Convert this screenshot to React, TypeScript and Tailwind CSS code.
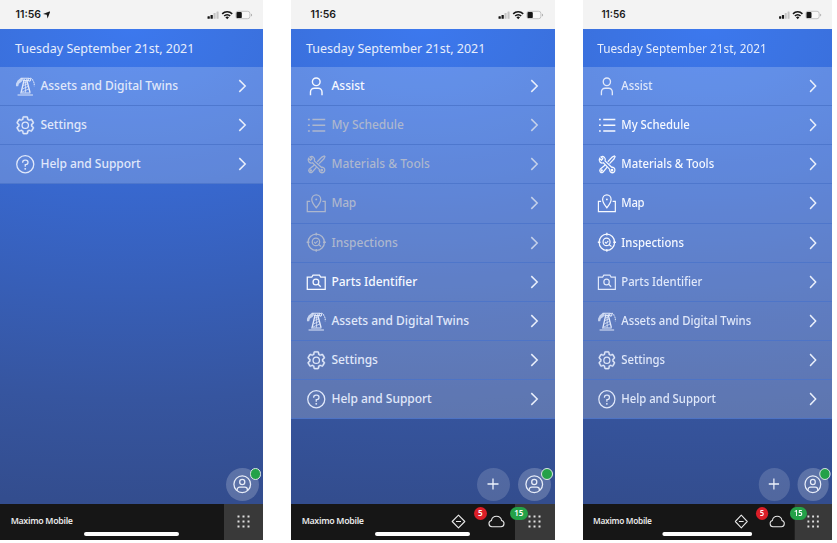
import React from "react";

const S = { fill: "none", stroke: "currentColor", strokeWidth: 2 } as const;

const icons: Record<string, React.ReactNode> = {
  user: (
    <g {...S} strokeWidth={2.2}>
      <circle cx="16" cy="9" r="6" />
      <path d="M7 30V25a6 6 0 0 1 6-6h6a6 6 0 0 1 6 6v5" />
    </g>
  ),
  list: (
    <g {...S} strokeWidth={2.2}>
      <path d="M10 7h20M10 16h20M10 25h20" />
      <path d="M3 7h3M3 16h3M3 25h3" />
    </g>
  ),
  tools: (
    <g {...S} strokeWidth={2}>
      <path d="M13 10.800a4.800 4.800 0 0 0-6.700-6.200l3 3-2.300 2.300-3-3a4.800 4.800 0 0 0 6.200 6.700L20.800 24a4.300 4.300 0 1 0 3.200-3.200Z" />
      <circle cx="24.500" cy="25.200" r="1.200" />
      <path d="m17.600 12.200 7.200-7.300 3.600-1.900 1.200 1.200-1.900 3.600-7.200 7.200M13.200 17l-8.300 6.800a3.300 3.300 0 0 0 4.600 4.600l7-8" />
      <circle cx="7.500" cy="25.800" r="1" />
    </g>
  ),
  map: (
    <g {...S}>
      <path d="M16 23c-3-3.600-7-8.200-7-13a7 7 0 0 1 14 0c0 4.800-4 9.400-7 13Z" />
      <circle cx="16" cy="10" r="1.500" fill="currentColor" stroke="none" />
      <path d="M6.500 13H2v16h28V13h-4.500" />
    </g>
  ),
  inspect: (
    <g {...S}>
      <circle cx="16" cy="16" r="12.800" />
      <path d="M16 1v4.500M16 26.500V31M1 16h4.500M26.500 16H31" />
      <circle cx="15.500" cy="15.500" r="5.800" />
      <path d="m19.600 19.600 4 3M12.800 15.600l2 2 3.600-3.800" strokeWidth="1.700" />
    </g>
  ),
  camera: (
    <g {...S}>
      <path d="M2 8h7l2-3h10l2 3h7v19H2Z" />
      <circle cx="15.500" cy="15.500" r="4.500" />
      <path d="m18.700 18.700 4.300 4.300" />
    </g>
  ),
  asset: (
    <g fill="none" stroke="currentColor" strokeWidth="1.600">
      <path d="M1.500 16V12l2.500-5 5-4 4 1-2.500 5-4.500 3-1 4Z" fill="currentColor" fillOpacity="0.8" stroke="none" />
      <path d="M9 3.500h13M12 7h9" />
      <path d="m14.500 5-5 21M18 5l5.500 21" strokeWidth="2.200" />
      <path d="m14 11 5-2M13 15l7-3M12 20l9-4M11 25l11-5" strokeWidth="1.200" />
      <path d="M16.500 8v18" strokeWidth="1.200" />
      <path d="M4 29.500h24M8 26.500h16" />
      <path d="m24 3 3.500 3 2.500 5v5" strokeDasharray="2.500 1.200" />
      <circle cx="22.500" cy="6" r="2" />
    </g>
  ),
  settings: (
    <g fill="currentColor">
      <path d="M27,16.760c0-.25,0-.5,0-.76s0-.51,0-.77l1.920-1.680A2,2,0,0,0,29.300,11L26.940,7a2,2,0,0,0-1.730-1,2,2,0,0,0-.64.1l-2.430.82a11.350,11.350,0,0,0-1.310-.75l-.51-2.520a2,2,0,0,0-2-1.610H13.640a2,2,0,0,0-2,1.610l-.51,2.520a11.480,11.480,0,0,0-1.320.75L7.430,6.060A2,2,0,0,0,6.790,6,2,2,0,0,0,5.060,7L2.700,11a2,2,0,0,0,.41,2.510L5,15.240c0,.25,0,.5,0,.76s0,.51,0,.77L3.110,18.450A2,2,0,0,0,2.700,21L5.060,25a2,2,0,0,0,1.730,1,2,2,0,0,0,.64-.1l2.430-.82a11.350,11.350,0,0,0,1.310.75l.51,2.520a2,2,0,0,0,2,1.610h4.720a2,2,0,0,0,2-1.610l.51-2.520a11.480,11.480,0,0,0,1.320-.75l2.420.82a2,2,0,0,0,.64.1,2,2,0,0,0,1.730-1L29.300,21a2,2,0,0,0-.41-2.510ZM25.210,24l-3.430-1.160a8.860,8.860,0,0,1-2.710,1.570L18.360,28H13.640l-.71-3.550a9.360,9.360,0,0,1-2.700-1.570L6.790,24,4.430,20l2.720-2.400a8.900,8.900,0,0,1,0-3.130L4.430,12,6.790,8l3.430,1.160a8.860,8.860,0,0,1,2.710-1.570L13.640,4h4.720l.71,3.550a9.360,9.360,0,0,1,2.700,1.570L25.210,8,27.570,12l-2.720,2.400a8.900,8.900,0,0,1,0,3.130L27.570,20Z" stroke="currentColor" strokeWidth="0.500" />
      <circle cx="16" cy="16" r="5" {...S} />
    </g>
  ),
  help: (
    <g {...S}>
      <circle cx="16" cy="16" r="13.300" />
      <path d="M12 13.500V13a3.500 3.500 0 0 1 3.500-3.500h1.300a3.500 3.500 0 0 1 0 7H16v3.300" />
      <circle cx="16" cy="23.200" r="1.500" fill="currentColor" stroke="none" />
    </g>
  ),
};

const labels: Record<string, [string, string]> = {
  user: ["Assist", "tracking-[0px]"],
  list: ["My Schedule", "tracking-[0px]"],
  tools: ["Materials & Tools", "tracking-[0px]"],
  map: ["Map", "tracking-[-0.3px]"],
  inspect: ["Inspections", "tracking-[0px]"],
  camera: ["Parts Identifier", "tracking-[-0.03px]"],
  asset: ["Assets and Digital Twins", "tracking-[-0.03px]"],
  settings: ["Settings", "tracking-[-0.05px]"],
  help: ["Help and Support", "tracking-[-0.03px]"],
};

const all = ["user", "list", "tools", "map", "inspect", "camera", "asset", "settings", "help"];

function StatusBar({ located }: { located?: boolean }) {
  return (
    <div className={`flex h-[29px] shrink-0 items-center bg-[#f3f3f3] pr-[10.500px] text-[#1a1a1a] ${located ? "pl-[15.500px]" : "pl-[19.500px]"}`}>
      <span className="pt-[2px] font-[Inter] text-[10.500px] leading-none font-semibold">11:56</span>
      {located && (
        <svg className="mt-[1px] ml-[1.500px] size-[7.500px]" viewBox="0 0 14 14" fill="currentColor">
          <path d="M14 0 8.500 14 7 7 0 5.500Z" />
        </svg>
      )}
      <svg className="ml-auto h-[10px] w-[46px]" viewBox="0 0 46 10" fill="#151515">
        <rect x="0.500" y="6.300" width="2.300" height="2.400" rx="0.500" />
        <rect x="3.500" y="5" width="2.300" height="3.700" rx="0.500" />
        <rect x="6.500" y="3" width="2.100" height="5.700" rx="0.500" fill="#c4c4c4" />
        <rect x="9.500" y="1.400" width="2.100" height="7.300" rx="0.500" fill="#c4c4c4" />
        <g fill="none" stroke="#151515" strokeWidth="1.600">
          <path d="M15.200 3.800a7.200 7.200 0 0 1 10 0M17.200 6a4.200 4.200 0 0 1 6 0" />
        </g>
        <path d="m20.200 9.300 1.800-2.100a2.700 2.700 0 0 0-3.600 0Z" />
        <rect x="28.900" y="1.300" width="14" height="7.400" rx="2.200" fill="#f8f8f8" stroke="#b5b5b5" strokeWidth="0.800" />
        <rect x="29.500" y="1.900" width="5.300" height="6.200" rx="1.200" />
        <path d="M44 3.800v2.600q1.100-.4 1.100-1.300t-1.100-1.300" fill="#aaa" />
      </svg>
    </div>
  );
}

function Row({ id, dim, bright }: { id: string; dim: boolean; bright: boolean }) {
  const [label, track] = labels[id];
  const tone = dim ? "text-[#adb7ce]" : bright ? "text-[#f6f9ff]" : "text-[#e0e8fa]";
  return (
    <div className={`flex h-[39.150px] items-center border-b border-[#4a73c9]/80 bg-white/20 pr-[16px] pl-[15.300px] ${tone}`}>
      <svg className="size-[20.500px] shrink-0" viewBox="0 0 32 32">{icons[id]}</svg>
      <span className={`ml-[4.700px] text-[12px] leading-none font-medium whitespace-nowrap ${track}`}>{label}</span>
      <svg className="ml-auto h-[14px] w-[9px]" viewBox="0 0 9 14" fill="none" stroke={dim ? "#c5d1ea" : "#e9effb"} strokeWidth="1.500">
        <path d="m1.300 1.100 5.900 5.900-5.900 5.900" />
      </svg>
    </div>
  );
}

function Account() {
  return (
    <div className="relative flex size-[33px] items-center justify-center rounded-full bg-white/20 text-[#e8edf8]">
      <svg className="size-[20.500px]" viewBox="0 0 32 32" {...S}>
        <circle cx="16" cy="16" r="13" />
        <circle cx="16" cy="12.500" r="4" />
        <path d="M8 26v-1.500a4 4 0 0 1 4-4h8a4 4 0 0 1 4 4V26" />
      </svg>
      <span className="absolute top-[0.500px] right-[-2px] size-[11.500px] rounded-full border-[1.500px] border-[#dfe6e8] bg-[#24a148]" />
    </div>
  );
}

function Phone({ ids, dims = [], brights = [], full, located, frame }: { ids: string[]; dims?: string[]; brights?: string[]; full?: boolean; located?: boolean; frame: string }) {
  return (
    <div className={`flex h-[540px] shrink-0 flex-col overflow-hidden ${frame}`}>
      <StatusBar located={located} />
      <div className="flex flex-1 flex-col bg-[radial-gradient(320%_100%_at_50%_0%,#3c78ee_0%,#3b73e2_12%,#3868cf_33%,#36559f_78%,#334d8e_100%)]">
        <div className="flex h-[38px] items-center pt-[2px] pl-[15px] text-[12.500px] leading-none whitespace-nowrap text-[#e6edfc]">
          Tuesday September 21st, 2021
        </div>
        {ids.map((id) => (
          <Row key={id} id={id} dim={dims.includes(id)} bright={brights.includes(id)} />
        ))}
        <div className="mt-auto mb-[3px] flex justify-end gap-[8px] pr-[4px]">
          {full && (
            <div className="flex size-[33px] items-center justify-center rounded-full bg-white/15">
              <svg className="size-[12px]" viewBox="0 0 12 12" stroke="#edf2fc" strokeWidth="1.300"><path d="M6 .5v11M.5 6h11" /></svg>
            </div>
          )}
          <Account />
        </div>
      </div>
      <div className="relative flex h-[36.300px] shrink-0 items-center bg-[#161616] pl-[10.700px] text-[#e8e8e8]">
        <span className="text-[8.800px] leading-none font-semibold tracking-[-0.32px] whitespace-nowrap">Maximo Mobile</span>
        <div className="ml-auto flex h-full items-center">
          {full && (
            <>
              <svg className="mr-[22.500px] size-[15px]" viewBox="0 0 15 15" fill="none" stroke="currentColor" strokeWidth="1.100">
                <path d="M7.500 1.200 13.800 7.500 7.500 13.800 1.200 7.500ZM5 7.500h5" strokeLinejoin="round" />
              </svg>
              <svg className="mr-[10px] h-[13px] w-[17px]" viewBox="0 0 17 13" fill="none" stroke="currentColor" strokeWidth="1.100">
                <path d="M4 11.800h9a3.200 3.200 0 0 0 .6-6.300 5.200 5.200 0 0 0-10.200 0A3.200 3.200 0 0 0 4 11.800Z" />
              </svg>
            </>
          )}
          <div className="flex h-full w-[39.500px] items-center justify-center bg-[#393939]">
            <svg className="size-[13px]" viewBox="0 0 13 13" fill="#e0e0e0">
              {[0, 1, 2].map((r) => [0, 1, 2].map((c) => (
                <rect key={`${r}${c}`} x={0.5 + c * 5} y={0.5 + r * 5} width="2" height="2" />
              )))}
            </svg>
          </div>
        </div>
        {full && (
          <>
            <span className="absolute top-[3.500px] left-[183px] flex h-[12.500px] w-[12.500px] items-center justify-center rounded-full bg-[#da1e28] text-[8px] leading-none font-semibold text-white">5</span>
            <span className="absolute top-[3.500px] left-[219px] flex h-[12.500px] w-[17.500px] items-center justify-center rounded-full bg-[#24a148] text-[8px] leading-none font-semibold text-white">15</span>
          </>
        )}
        <span className="absolute bottom-[4.500px] left-[84px] h-[3.500px] w-[95px] rounded-full bg-white" />
      </div>
    </div>
  );
}

export default function App() {
  return (
    <div className="flex h-[543px] w-[837px] gap-[28px] overflow-hidden bg-white font-['Noto_Sans',sans-serif]">
      <Phone ids={["asset", "settings", "help"]} located frame="w-[263px]" />
      <Phone ids={all} dims={["list", "tools", "map", "inspect"]} brights={["user", "camera"]} full frame="w-[263.500px]" />
      <Phone ids={all} brights={["list", "tools", "map", "inspect"]} full frame="ml-[0.500px] w-[263.500px] origin-left scale-x-[0.945]" />
    </div>
  );
}
